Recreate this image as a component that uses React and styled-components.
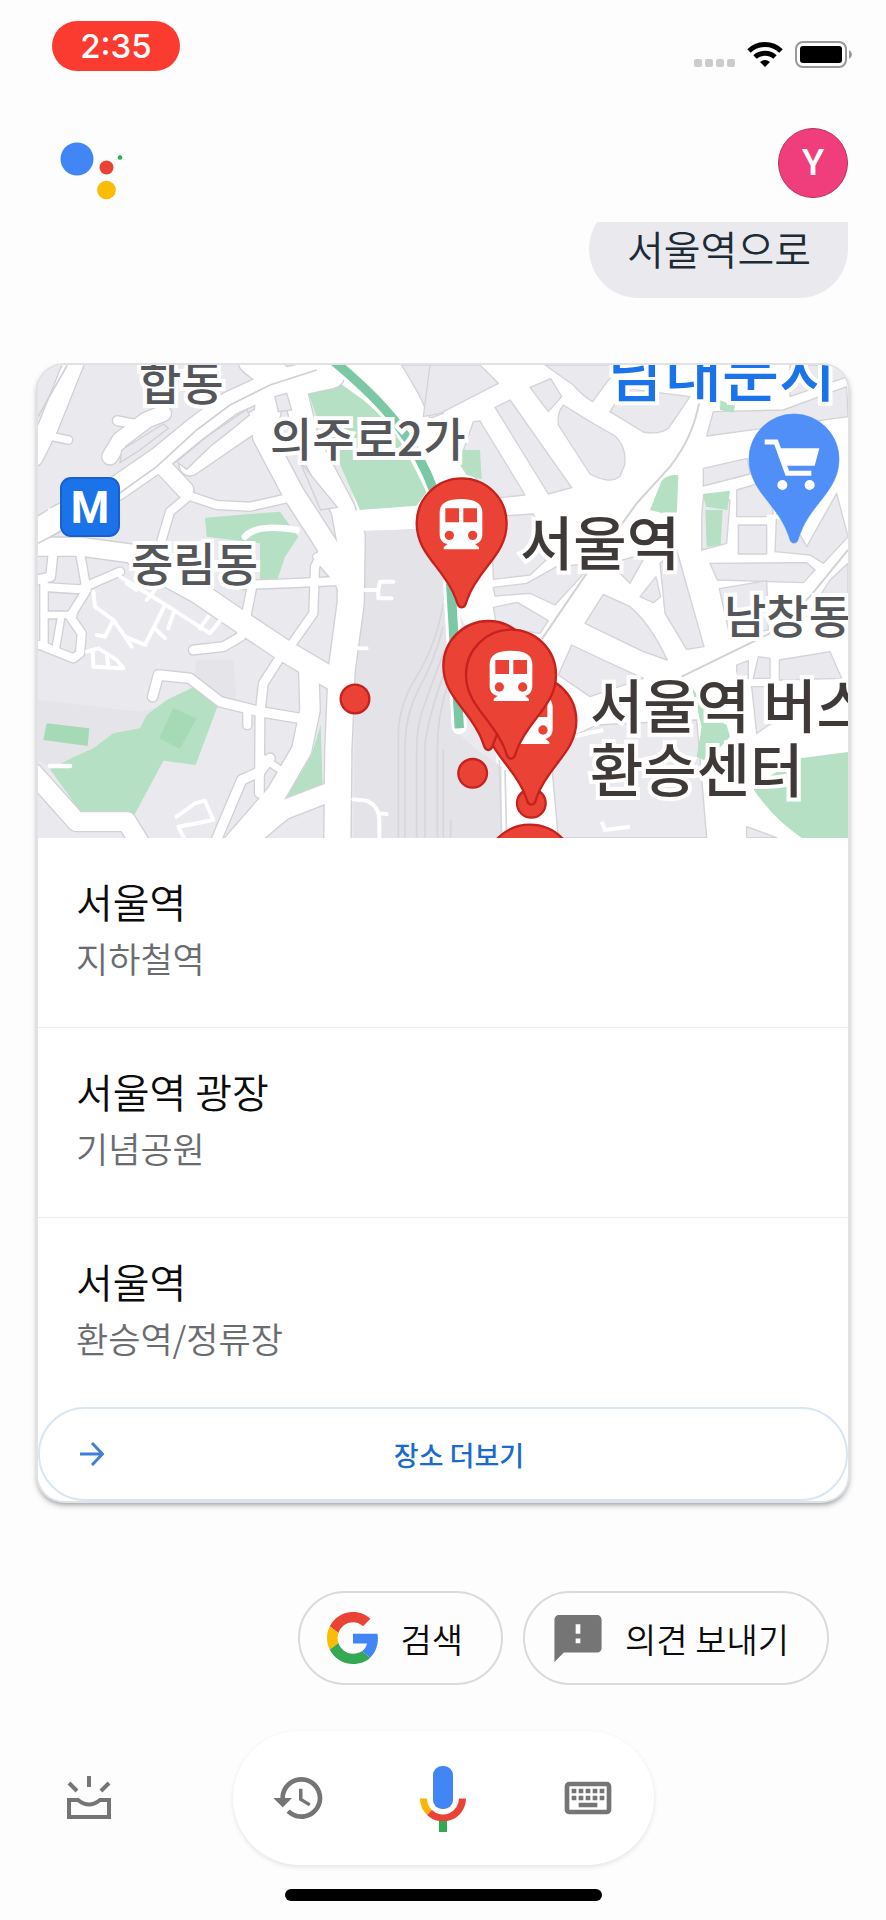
import React from "react";
import styled, { createGlobalStyle } from "styled-components";

const places = [
  { id: 1, name: "서울역", kind: "지하철역" },
  { id: 2, name: "서울역 광장", kind: "기념공원" },
  { id: 3, name: "서울역", kind: "환승역/정류장" },
];

//지도 도로 (w: 도로 폭)
const roads = [
  { w: 58, d: "M135 30 L55 230 L10 320" },
  { w: 22, d: "M45 255 L115 270" },
  { w: 70, d: "M10 550 L90 500 L260 415 L390 325 L500 235 L600 160 L720 105 L900 60" },
  { w: 46, d: "M240 320 L270 270 L350 210 L400 190" },
  { w: 26, d: "M262 212 L330 225" },
  { w: 50, d: "M395 345 L465 420" },
  { w: 62, d: "M480 345 L560 290 L640 235 L720 190" },
  { w: 90, d: "M670 30 L760 100 L900 70" },
  { w: 62, d: "M710 130 L700 260 L790 430 L900 600 L960 720" },
  { w: 70, d: "M790 100 L830 270 L940 480 L965 620" },
  { w: 24, d: "M470 435 L560 465 L660 470 L770 445" },
  { w: 24, d: "M480 435 L420 485 L395 570" },
  { w: 54, d: "M10 590 L150 590 L300 610 L400 670" },
  { w: 64, d: "M380 660 L500 725 L640 820 L760 900 L930 1000" },
  { w: 24, d: "M640 705 L780 700 L940 692" },
  { w: 26, d: "M668 700 L650 790 L632 860 L580 890 L490 900" },
  { w: 24, d: "M880 600 L855 650 L850 790 L780 890" },
  { w: 20, d: "M860 620 L925 695" },
  { w: 26, d: "M745 930 L700 1000 L690 1090 L688 1330" },
  { w: 28, d: "M368 1040 L385 975 L480 985 L570 1055 L690 1085 L810 1105" },
  { w: 24, d: "M652 1080 L652 1125" },
  { w: 28, d: "M720 1225 L690 1265 L635 1290 L580 1420 L555 1480" },
  { w: 20, d: "M700 1225 L760 1265" },
  { w: 58, d: "M836 950 L840 1080 L815 1200 L740 1330 L610 1480" },
  { w: 56, d: "M890 1330 L760 1380 L640 1480" },
  { w: 56, d: "M10 1270 L140 1415 L290 1415 L330 1480" },
  { w: 78, d: "M965 560 L962 760 L935 960 L925 1200 L922 1480" },
  { w: 26, d: "M70 600 L62 680 L20 690" },
  { w: 24, d: "M55 712 L150 718 L200 695 L270 665" },
  { w: 24, d: "M150 610 L170 720 L120 800 L155 850 L150 910 L130 925 L30 885" },
  { w: 22, d: "M42 700 L42 880" },
  { w: 20, d: "M45 795 L130 795 M92 810 L78 890" },
];

const lanes = [
  "M190 725 L195 770 L250 810 L285 860 L345 885 L405 765",
  "M270 680 L400 760 L540 850 L580 800",
  "M250 810 L225 860 L200 855 M350 750 L375 720 M430 790 L415 835 M510 835 L535 800",
  "M375 835 L405 865 M285 860 L305 890",
  "M170 905 L205 895 L260 930 L280 955 L190 950 L188 900 M230 910 L235 950",
  "M440 1400 L495 1360 L525 1352 L550 1410 L445 1430 L470 1480",
  "M1005 720 L1045 720 L1050 695 L1090 695 M1045 720 L1045 745 L1085 745 M985 895 L1010 895",
  "M970 1348 L1010 1352 Q1048 1370 1048 1410 L1048 1470 M1045 1390 L1070 1392",
  "M60 480 L60 510 M290 700 L320 720 M455 730 L470 715",
];

//오른쪽 시가지 블록
const blocks = [
  "M0 45 L150 45 L205 100 L30 190 L-20 200 Z",
  "M130 215 L150 213 L285 435 L190 445 L90 330 Z",
  "M195 172 L240 150 L425 413 L355 432 Z",
  "M400 165 L480 215 L555 258 Q590 290 584 345 L570 378 Q540 405 480 372 L385 225 Q380 190 400 165 Z",
  "M300 112 L362 86 L395 140 L355 185 Z",
  "M345 45 L540 45 L550 70 L488 155 Q455 135 430 105 Z",
  "M585 115 L780 140 L715 235 Q690 255 640 246 L540 185 Z",
  "M850 185 L1060 180 L1250 110 L1254 200 L1000 235 L830 258 Z",
  "M820 355 L952 325 L960 372 L820 408 Z",
  "M920 420 L1020 390 L1030 500 L920 500 Z",
  "M925 525 L1010 525 L1010 612 L925 612 Z",
  "M1040 490 L1080 500 L1130 590 L1220 430 L1254 560 L1180 640 L1140 615 L1035 605 Z",
  "M815 500 L815 600 L890 580 L900 450 L820 440 Z",
  "M690 640 L740 600 L822 890 L770 898 L705 790 Z",
  "M840 640 L1130 638 L1155 660 L1120 698 L862 690 Z",
  "M868 716 L1010 692 L1015 840 L900 860 Z",
  "M465 820 L520 733 L600 770 Q660 820 712 930 L640 905 Z",
  "M185 500 L310 492 L370 610 L300 675 L190 688 Z",
  "M190 712 L290 700 L380 650 L490 640 L375 765 L300 730 L195 738 Z",
  "M190 772 L262 757 L355 812 L330 850 L200 830 Z",
  "M385 975 L425 885 L520 930 L640 985 L480 1040 Z",
  "M630 740 L678 680 L692 740 L670 758 Z",
  "M360 1190 L500 1125 L800 1110 L830 1463 L385 1463 Z",
  "M920 945 L955 932 L955 985 L920 985 Z",
  "M1048 930 L1200 905 L1235 985 L1048 990 Z",
  "M965 1010 L1030 1010 L1040 1110 L980 1150 Z",
  "M985 920 L1020 925 L1020 985 L970 985 Z",
  "M950 1430 L1040 1463 L950 1463 Z",
  "M1080 45 L1254 45 L1254 80 L1080 140 Z",
  "M1200 690 L1254 640 L1254 760 L1130 800 Z",
  "M540 640 L650 610 L600 700 Z",
];

const GlobalStyle = createGlobalStyle`
  * {
    box-sizing: border-box;
    margin: 0;
    padding: 0;
  }
  body {
    background-color: #fdfdfd;
    font-family: "Noto Sans CJK KR", sans-serif;
  }
  button {
    border: none;
    background: none;
    font-family: inherit;
    cursor: pointer;
  }
  svg {
    display: block;
    flex-shrink: 0;
  }
`;

const PinShape = ({ x, y, blue }) => (
  <path
    transform={`translate(${x} ${y})`}
    d="M0 252 C-12 252 -12 240 -18 225 C-50 135 -135 95 -135 0 A135 135 0 0 1 135 0 C135 95 50 135 18 225 C12 240 12 252 0 252 Z"
    fill={blue ? "#4f8ff7" : "#ea4335"}
    stroke={blue ? "#4f8ff7" : "#c5221f"}
    strokeWidth={blue ? 2 : 7}
  />
);

const TrainIcon = ({ x, y }) => (
  <g transform={`translate(${x} ${y})`}>
    <path
      fill="#fff"
      d="M-64 -32 C-64 -60 -42 -73 0 -73 S64 -60 64 -32 V32 C64 50 54 60 42 62 L54 72 V78 H-52 V72 L-40 62 C-54 60 -64 50 -64 32 Z"
    />
    <path fill="#ea4335" d="M-47 -45 h41 v42 h-41 Z M7 -45 h41 v42 h-41 Z" />
    <circle cx="-35" cy="36" r="14" fill="#ea4335" />
    <circle cx="35" cy="36" r="14" fill="#ea4335" />
  </g>
);

const MapDrawing = () => (
  <svg
    width="100%"
    height="473"
    viewBox="24 45 2430 1419"
    preserveAspectRatio="xMinYMin slice"
    aria-hidden="true"
  >
    <rect x="0" y="0" width="2500" height="1500" fill="#eaeaee" />
    <path fill="#e4e4e9" d="M24 1050 L330 1085 L390 1070 L490 1015 L500 930 L610 930 L620 1060 L560 1075 L400 1235 L310 1400 L24 1230 Z" />

    <g fill="#b5e0c3">
      <path d="M60 1258 L130 1222 L190 1195 L250 1150 L330 1135 L350 1095 L410 1050 L490 1012 L562 1070 L497 1245 L400 1232 L310 1400 L160 1397 Z" />
      <path d="M525 503 L750 485 L805 560 L765 620 L740 695 L690 695 L690 580 L530 560 Z" />
      <path d="M872 1125 L878 1310 L765 1350 L845 1215 Z" />
    </g>
    <path fill="#a6dab6" d="M50 1120 L178 1135 L173 1188 L40 1170 Z M430 1075 L500 1105 L450 1197 L388 1165 Z" />

    {/* 시가지 바탕 */}
    <path fill="#fff" d="M850 30 L2480 30 L2480 1480 L1420 1480 L1380 1000 L1250 700 L1250 540 L1000 540 Z" />
    <path fill="#e3e3e8" d="M1003 545 L1250 530 L1250 760 L1285 1150 L1340 1200 L1415 1250 L1415 1480 L970 1480 L975 1000 L1000 780 Z" />
    <path fill="#eaeaee" stroke="#d3d3d8" strokeWidth="4" d="M1115 45 L1240 45 L1240 190 L1200 205 L1165 130 Z" />
    <path fill="#b5e0c3" d="M828 108 L905 82 L1000 150 L1090 230 L1190 425 L1160 467 L990 480 L920 320 L860 200 Z" />

    <g fill="none" strokeLinecap="round" strokeLinejoin="round">
      <g stroke="#d0d0d6">
        {roads.map((road, i) => (
          <path key={i} d={road.d} strokeWidth={road.w + 8} />
        ))}
      </g>
      <g stroke="#fff">
        {roads.map((road, i) => (
          <path key={i} d={road.d} strokeWidth={road.w} />
        ))}
        {lanes.map((d, i) => (
          <path key={i} d={d} strokeWidth="12" />
        ))}
        <path d="M980 512 L1160 503 L1430 475 L1700 440" strokeWidth="62" />
        <path d="M645 560 Q680 520 800 540" strokeWidth="20" />
        <path d="M60 1248 L120 1248" strokeWidth="14" />
      </g>
    </g>
    <g fill="#eaeaee" stroke="#d0d0d6" strokeWidth="4">
      <path d="M735 140 L770 130 L785 180 L745 185 Z" />
      <path d="M440 335 L530 260 L650 178 L658 195 L610 235 L540 290 L470 358 Z" />
      <path d="M275 300 L400 222 L415 235 L330 300 L270 338 Z" />
      <path d="M810 335 L922 472 L872 480 Z" />
    </g>
    <path fill="none" stroke="#d0d0d6" strokeWidth="5" d="M24 580 L90 545 M265 432 L380 350 L500 240 L600 165 L720 105 L860 60 M24 200 L112 45" />

    <g transform="translate(1200 0)">
      <g fill="#eaeaee" stroke="#d3d3d8" strokeWidth="4" strokeLinejoin="round">
        {blocks.map((d, i) => (
          <path key={i} d={d} />
        ))}
      </g>
      <g fill="#b5e0c3">
        <path d="M695 392 Q715 372 745 376 L740 500 L660 480 Z" />
        <path d="M818 432 L900 422 L892 480 L828 470 Z M826 480 L878 480 L872 585 L830 590 Z" />
        <path d="M785 1010 L840 1095 L890 1125 L900 1160 L830 1235 L800 1220 L815 1130 Z" />
        <path d="M965 1310 L1110 1225 L1260 1205 L1260 1470 L1125 1470 Q1030 1410 965 1310 Z" />
        <path d="M868 150 L915 168 L910 188 L870 180 Z" />
        <path d="M60 300 L150 300 L155 388 L110 375 Z" />
      </g>
      <path fill="none" stroke="#fff" strokeWidth="12" d="M1010 500 L1060 500 M890 860 L920 1000 M1040 890 L1200 870 M430 1160 L520 1140 M515 1415 L525 1440 L600 1430" />
      <path fill="none" stroke="#d3d3d3" strokeWidth="6" d="M808 155 Q790 260 720 350 L620 460 L470 670 L335 868 M755 980 L1020 850 L1140 740 L1254 600" />
    </g>

    {/* 철로 */}
    <g fill="none" stroke="#d6d6db" strokeWidth="5">
      <path d="M1240 760 Q1220 880 1160 980 Q1108 1060 1105 1150 L1105 1463" />
      <path d="M1240 830 Q1210 940 1165 1020 Q1128 1090 1125 1180 L1125 1463" />
      <path d="M1245 900 Q1220 960 1185 1060 Q1160 1120 1160 1200 L1160 1463" />
      <path d="M1250 950 Q1200 1080 1185 1180 L1185 1463 M1255 1000 Q1222 1090 1222 1200 L1222 1463" />
      <path d="M1240 1200 L1240 1463 M1262 1410 L1262 1463 M1408 1230 L1415 1463 M1425 1260 L1430 1463" />
    </g>
    <path fill="none" stroke="#fff" strokeWidth="46" strokeLinecap="round" d="M895 20 Q1030 130 1100 220 Q1170 310 1215 430 M1262 700 L1288 1130" />
    <path fill="none" stroke="#7bc8a4" strokeWidth="28" d="M895 20 Q1030 130 1100 220 Q1170 310 1215 430 M1262 700 L1288 1135" />

    <g fill="#ea4335" stroke="#c5221f" strokeWidth="7">
      <circle cx="975" cy="1047" r="43" />
      <circle cx="1328" cy="1270" r="43" />
      <circle cx="1504" cy="1360" r="43" />
    </g>
    <PinShape x={1295} y={520} />
    <TrainIcon x={1293} y={520} />
    <PinShape x={1504} y={1112} />
    <TrainIcon x={1504} y={1104} />
    <PinShape x={1375} y={948} />
    <PinShape x={1443} y={974} />
    <TrainIcon x={1443} y={975} />
    <PinShape x={1500} y={1559} />

    <PinShape x={2292} y={327} blue />
    <g transform="translate(1200 0)">
      <path fill="none" stroke="#fff" strokeWidth="15" d="M1004 276 H1038 L1072 370 H1144" />
      <path fill="#fff" d="M1044 295 H1168 L1154 347 H1064 Z" />
      <circle cx="1057" cy="405" r="15" fill="#fff" />
      <circle cx="1139" cy="405" r="15" fill="#fff" />
    </g>
  </svg>
);

const WifiIcon = () => (
  <svg width="36" height="26" viewBox="0 0 36 26" aria-hidden="true">
    <g fill="none" stroke="#000" strokeWidth="5">
      <path d="M2 10 A23 23 0 0 1 34 10" />
      <path d="M8 16 A15 15 0 0 1 28 16" />
    </g>
    <path d="M13 21 A8 8 0 0 1 23 21 L18 26 Z" />
  </svg>
);

const BatteryIcon = () => (
  <svg width="58" height="27" viewBox="0 0 58 27" aria-hidden="true">
    <rect x="1" y="1" width="50" height="25" rx="7" fill="none" stroke="#999" strokeWidth="2" />
    <rect x="5" y="5" width="42" height="17" rx="3" />
    <path d="M54 9 Q57 11 57 13.5 T54 18 Z" fill="#999" />
  </svg>
);

const AssistantLogo = () => (
  <svg width="64" height="60" viewBox="0 0 64 60" aria-hidden="true">
    <circle cx="17" cy="17" r="16.5" fill="#4285f4" />
    <circle cx="46.5" cy="25.5" r="7" fill="#ea4335" />
    <circle cx="60" cy="15.5" r="2.3" fill="#34a853" />
    <circle cx="46.5" cy="48" r="9.3" fill="#fbbc04" />
  </svg>
);

const ArrowIcon = () => (
  <svg width="24" height="24" viewBox="0 0 24 24" aria-hidden="true">
    <path fill="none" stroke="#3f7fd8" strokeWidth="3" d="M0 12 H22 M12 1 L22.5 12 L12 23" />
  </svg>
);

const GoogleIcon = () => (
  <svg width="52" height="52" viewBox="0 0 48 48" aria-hidden="true">
    <path fill="#EA4335" d="M24 9.5c3.54 0 6.71 1.22 9.21 3.6l6.85-6.85C35.9 2.38 30.47 0 24 0 14.62 0 6.51 5.38 2.56 13.22l7.98 6.19C12.43 13.72 17.74 9.5 24 9.5z" />
    <path fill="#4285F4" d="M46.98 24.55c0-1.57-.15-3.09-.38-4.55H24v9.02h12.94c-.58 2.96-2.26 5.48-4.78 7.18l7.73 6c4.51-4.18 7.09-10.36 7.09-17.65z" />
    <path fill="#FBBC05" d="M10.53 28.59c-.48-1.45-.76-2.99-.76-4.59s.27-3.14.76-4.59l-7.98-6.19C.92 16.46 0 20.12 0 24c0 3.88.92 7.54 2.56 10.78l7.97-6.19z" />
    <path fill="#34A853" d="M24 48c6.48 0 11.93-2.13 15.89-5.81l-7.73-6c-2.15 1.45-4.92 2.3-8.16 2.3-6.26 0-11.57-4.22-13.47-9.91l-7.98 6.19C6.51 42.62 14.62 48 24 48z" />
  </svg>
);

const FeedbackIcon = () => (
  <svg width="50" height="50" viewBox="1.4 1.2 21.2 21.2" aria-hidden="true">
    <path fill="#757575" d="M20 2H4c-1.1 0-1.99.9-1.99 2L2 22l4-4h14c1.1 0 2-.9 2-2V4c0-1.1-.9-2-2-2zm-7 12h-2v-2h2v2zm0-4h-2V6h2v4z" />
  </svg>
);

const UpdatesIcon = () => (
  <svg width="44" height="44" viewBox="0 0 44 44" aria-hidden="true">
    <g fill="none" stroke="#757575" strokeWidth="4">
      <path d="M22 0 V11 M2 7 L10 15 M42 7 L34 15" />
      <path d="M2 24 H11 Q22 33 33 24 H42 V41 H2 Z" />
    </g>
  </svg>
);

const HistoryIcon = () => (
  <svg width="56" height="56" viewBox="0 0 24 24" aria-hidden="true">
    <path fill="#757575" d="M13 3c-4.97 0-9 4.03-9 9H1l3.89 3.89.07.14L9 12H6c0-3.87 3.13-7 7-7s7 3.13 7 7-3.13 7-7 7c-1.93 0-3.68-.79-4.94-2.06l-1.42 1.42C8.27 19.99 10.51 21 13 21c4.97 0 9-4.03 9-9s-4.03-9-9-9zm-1 5v5l4.28 2.54.72-1.21-3.5-2.08V8H12z" />
  </svg>
);

const MicIcon = () => (
  <svg width="56" height="72" viewBox="0 0 56 72" aria-hidden="true">
    <rect x="18" y="4" width="20" height="43" rx="9" fill="#4285f4" />
    <path fill="none" stroke="#f9b404" strokeWidth="7" d="M8.5 36.5 A19.5 19.5 0 0 0 14.5 50.5" />
    <path fill="none" stroke="#ea4335" strokeWidth="7" d="M14.5 50.5 A19.5 19.5 0 0 0 47.5 36.5" />
    <rect x="24" y="59" width="8" height="11" fill="#34a853" />
  </svg>
);

const KeyboardIcon = () => (
  <svg width="56" height="56" viewBox="0 0 24 24" aria-hidden="true">
    <rect x="3" y="6" width="18" height="12" rx="1" fill="none" stroke="#757575" strokeWidth="2" />
    <path fill="#757575" d="M5 8h2v2H5zM8 8h2v2H8zM11 8h2v2h-2zM14 8h2v2h-2zM17 8h2v2h-2zM5 11h2v2H5zM8 11h2v2H8zM11 11h2v2h-2zM14 11h2v2h-2zM17 11h2v2h-2zM8 14h8v2H8z" />
  </svg>
);

const App = () => {
  return (
    <>
      <GlobalStyle />
      <Layout>
        <StatusBar>
          <Clock>2:35</Clock>
          <StatusIcons>
            <Signal>
              <i />
              <i />
              <i />
              <i />
            </Signal>
            <WifiIcon />
            <BatteryIcon />
          </StatusIcons>
        </StatusBar>
        <Header>
          <AssistantLogo />
          <Avatar aria-label="계정">Y</Avatar>
        </Header>

        <Conversation>
          <Bubble>서울역으로</Bubble>
          <Card>
            <MapBox>
              <MapDrawing />
              <AreaLabel $x={101} $y={-17}>합동</AreaLabel>
              <AreaLabel $x={232} $y={39}>의주로2가</AreaLabel>
              <AreaLabel $x={93} $y={164}>중림동</AreaLabel>
              <AreaLabel $x={686} $y={216}>남창동</AreaLabel>
              <MarketLabel $x={570} $y={-27}>남대문시</MarketLabel>
              <StationLabel $x={482} $y={143}>서울역</StationLabel>
              <StationLabel $x={552} $y={306}>
                서울역 버스
                <br />
                환승센터
              </StationLabel>
              <MetroBadge>M</MetroBadge>
            </MapBox>
            <PlaceList>
              {places.map((place) => (
                <li key={place.id}>
                  <PlaceLink href="#">
                    <PlaceName>{place.name}</PlaceName>
                    <PlaceKind>{place.kind}</PlaceKind>
                  </PlaceLink>
                </li>
              ))}
            </PlaceList>
            <MoreButton>
              <ArrowIcon />
              <span>장소 더보기</span>
            </MoreButton>
          </Card>
        </Conversation>

        <Chips>
          <Chip>
            <ChipIcon>
              <GoogleIcon />
            </ChipIcon>
            검색
          </Chip>
          <Chip>
            <ChipIcon>
              <FeedbackIcon />
            </ChipIcon>
            의견 보내기
          </Chip>
        </Chips>

        <BottomBar>
          <IconButton aria-label="업데이트">
            <UpdatesIcon />
          </IconButton>
          <InputPill>
            <IconButton aria-label="기록">
              <HistoryIcon />
            </IconButton>
            <IconButton aria-label="음성 입력">
              <MicIcon />
            </IconButton>
            <IconButton aria-label="키보드">
              <KeyboardIcon />
            </IconButton>
          </InputPill>
        </BottomBar>
        <HomeIndicator />
      </Layout>
    </>
  );
};

export default App;

const Layout = styled.div`
  display: flex;
  flex-direction: column;
  min-height: 100vh;
  overflow: hidden;
`;

const StatusBar = styled.div`
  display: flex;
  justify-content: space-between;
  align-items: center;
  height: 92px;
  padding: 0 33px 0 52px;
`;

const Clock = styled.div`
  width: 128px;
  height: 50px;
  border-radius: 25px;
  background-color: #fc3b30;
  color: #fff;
  font-family: Inter, sans-serif;
  font-size: 33px;
  font-weight: 500;
  line-height: 50px;
  text-align: center;
`;

const StatusIcons = styled.div`
  display: flex;
  align-items: center;
  gap: 12px;
  padding-top: 16px;
`;

const Signal = styled.div`
  display: flex;
  gap: 3px;
  padding-top: 18px;
  i {
    width: 8px;
    height: 8px;
    border-radius: 2px;
    background-color: #cccccc;
  }
`;

const Header = styled.header`
  display: flex;
  justify-content: space-between;
  align-items: flex-start;
  height: 130px;
  padding: 36px 38px 0 60px;
  svg {
    margin-top: 14px;
  }
`;

const Avatar = styled.button`
  width: 70px;
  height: 70px;
  border: 1px solid #b8305f;
  border-radius: 50%;
  background-color: #f03e7d;
  color: #fff;
  font-family: Roboto, sans-serif;
  font-size: 37px;
  font-weight: 500;
  line-height: 68px;
`;

const Conversation = styled.main`
  flex: 1;
  display: flex;
  flex-direction: column;
  overflow: hidden;
  padding: 0 38px 20px;
`;

//스크롤되어 위쪽이 잘린 말풍선
const Bubble = styled.p`
  align-self: flex-end;
  height: 98px;
  margin-top: -22px;
  padding: 0 37px 0 38px;
  border-radius: 49px 8px 49px 49px;
  background-color: #eaeaee;
  color: #1c2b36;
  font-size: 40px;
  font-weight: 350;
  line-height: 96px;
`;

const Card = styled.section`
  margin-top: 67px;
  border-radius: 26px;
  background-color: #fff;
  box-shadow: 0 0 0 2px #e2e2e5, 0 3px 6px rgba(40, 50, 60, 0.6);
  clip-path: inset(-2px -12px -12px -12px);
`;

const MapBox = styled.div`
  position: relative;
  overflow: hidden;
  border-radius: 26px 26px 0 0;
`;

const MapLabel = styled.span`
  position: absolute;
  left: ${(props) => props.$x}px;
  top: ${(props) => props.$y}px;
  font-weight: 500;
  line-height: 64px;
  white-space: nowrap;
  -webkit-text-stroke: 8px #ffffff;
  paint-order: stroke fill;
`;

const AreaLabel = styled(MapLabel)`
  color: #54565a;
  font-size: 46px;
`;

const StationLabel = styled(MapLabel)`
  color: #3f3a38;
  font-size: 58px;
`;

const MarketLabel = styled(MapLabel)`
  color: #1a73e8;
  font-size: 62px;
`;

const MetroBadge = styled.span`
  position: absolute;
  left: 22px;
  top: 112px;
  width: 60px;
  height: 60px;
  border: 2px solid #1a5fd0;
  border-radius: 11px;
  background-color: #1a73e8;
  color: #fff;
  font-family: Roboto, sans-serif;
  font-size: 44px;
  font-weight: 700;
  line-height: 58px;
  text-align: center;
`;

const PlaceList = styled.ul`
  list-style: none;
  li + li {
    border-top: 1px solid #ececec;
  }
`;

const PlaceLink = styled.a`
  display: block;
  padding: 34px 38px 41px;
  text-decoration: none;
`;

const PlaceName = styled.p`
  color: #0c0c0c;
  font-size: 40px;
  font-weight: 350;
  line-height: 58px;
`;

const PlaceKind = styled.p`
  color: #6a6c70;
  font-size: 35px;
  font-weight: 350;
  line-height: 56px;
`;

const MoreButton = styled.button`
  display: flex;
  align-items: center;
  gap: 8px;
  width: 100%;
  height: 94px;
  padding: 0 40px;
  border: 2px solid #d8e5f3;
  border-radius: 47px;
  span {
    flex: 1;
    color: #1a6bcb;
    font-size: 27px;
    font-weight: 500;
    text-align: center;
  }
`;

const Chips = styled.div`
  display: flex;
  justify-content: flex-end;
  gap: 20px;
  padding: 0 57px 46px;
`;

const Chip = styled.button`
  display: flex;
  align-items: center;
  gap: 22px;
  height: 94px;
  padding: 0 38px 0 28px;
  border: 2px solid #dadada;
  border-radius: 47px;
  color: #0c0c0c;
  font-size: 34px;
  font-weight: 350;
`;

const ChipIcon = styled.span`
  display: flex;
  justify-content: center;
  width: 50px;
`;

const BottomBar = styled.nav`
  display: grid;
  grid-template-columns: 1fr 421px 1fr;
  align-items: center;
  > button {
    justify-self: start;
    margin-left: 67px;
  }
`;

const InputPill = styled.div`
  display: flex;
  justify-content: space-between;
  align-items: center;
  height: 134px;
  padding: 0 38px;
  border-radius: 67px;
  background-color: #fff;
  box-shadow: 0 2px 5px rgba(0, 0, 0, 0.1);
`;

const IconButton = styled.button`
  display: flex;
`;

const HomeIndicator = styled.div`
  align-self: center;
  width: 317px;
  height: 12px;
  margin: 24px 0 19px;
  border-radius: 6px;
  background-color: #000;
`;
